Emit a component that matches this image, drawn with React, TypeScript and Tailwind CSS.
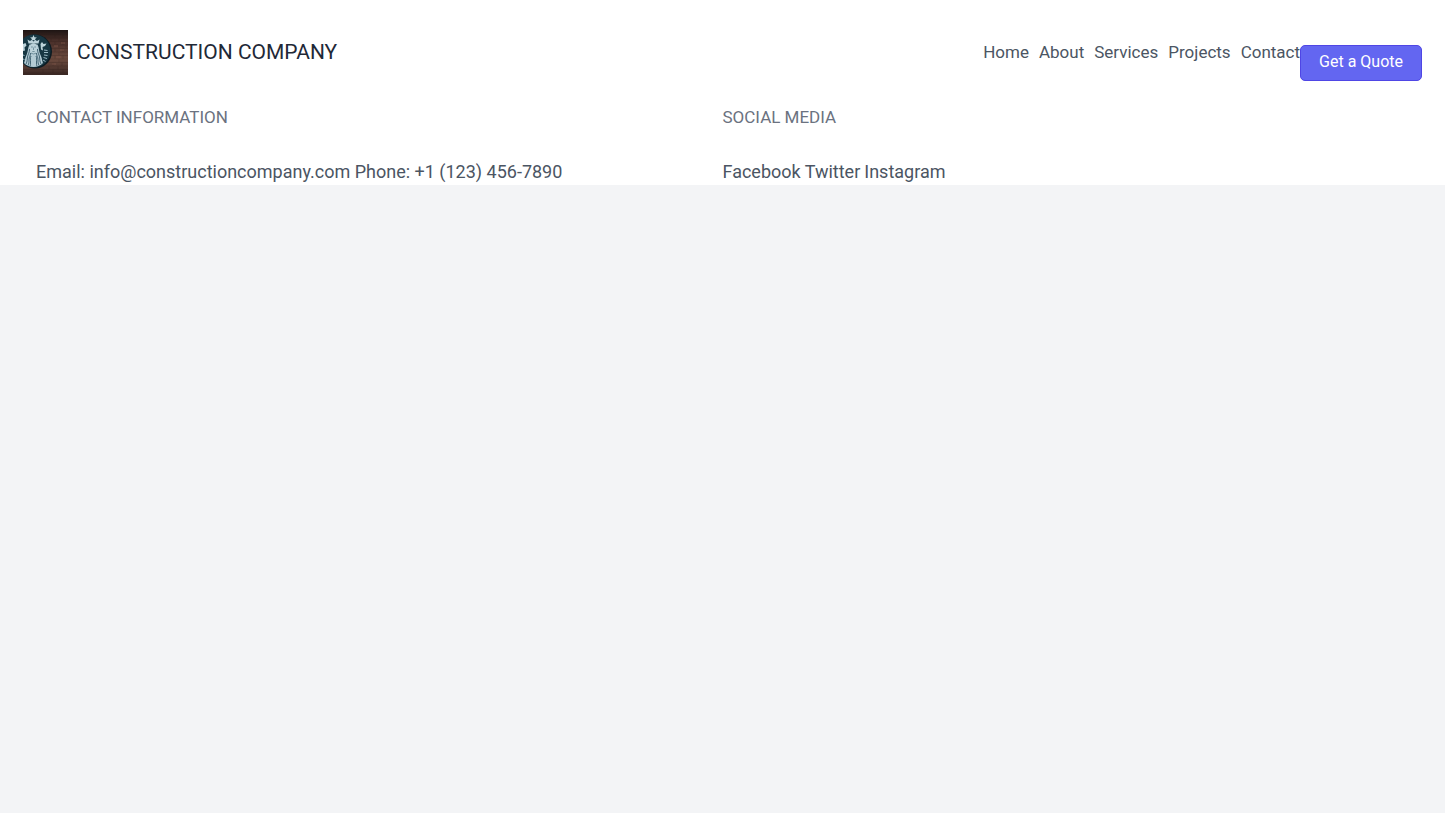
const navLinks = ['Home', 'About', 'Services', 'Projects', 'Contact'];
const socialLinks = ['Facebook', 'Twitter', 'Instagram'];

/**
 * Logo - round siren emblem hanging on a dark brick wall
 */
function Logo() {
  return (
    <svg className="w-[45px] h-[45px] shrink-0" viewBox="0 0 45 45" role="img" aria-label="Logo">
      <defs>
        <linearGradient id="wall" x1="0" y1="0" x2="0" y2="1">
          <stop offset="0" stopColor="#1d1413" />
          <stop offset="0.25" stopColor="#4a302a" />
          <stop offset="0.65" stopColor="#6b4a3e" />
          <stop offset="1" stopColor="#3a2824" />
        </linearGradient>
      </defs>
      <rect width="45" height="45" fill="url(#wall)" />
      {/* Brick courses */}
      <g stroke="#2b1a17" strokeWidth="0.5" opacity="0.4">
        <path d="M0 4.5H45M0 8H45M0 11.5H45M0 15H45M0 18.5H45M0 22H45M0 25.5H45M0 29H45M0 32.5H45M0 36H45M0 39.5H45M0 43H45" />
        <path d="M32 4.5v3.5M40 4.5v3.5M28 8v3.5M36 8v3.5M32 11.5v3.5M40 11.5v3.5M36 15v3.5M43 15v3.5M32 18.5v3.5M40 18.5v3.5M36 22v3.5M32 25.5v3.5M40 25.5v3.5M36 29v3.5M30 32.5v3.5M39 32.5v3.5M26 36v3.5M35 36v3.5M20 39.5v3.5M30 39.5v3.5M40 39.5v3.5" />
      </g>
      <path d="M31 16h4M37 20h4M33 27h5M29 34h4M38 13h4" stroke="#84594b" strokeWidth="0.7" />
      {/* Emblem */}
      <circle cx="12" cy="21.5" r="17" fill="#0c1b22" />
      <circle cx="11" cy="21" r="16.5" fill="#173743" />
      {/* Crown */}
      <path d="M10.5 5l1 2.2 2.4.2-1.8 1.5.5 2.2-2.1-1.2-2.1 1.2.5-2.2-1.8-1.5 2.4-.2z" fill="#bdd3da" />
      <path d="M4.5 9.5L7 11l1.5-1 2 1.5 2-1.5 1.5 1 2.5-1.5-1 4h-10z" fill="#bdd3da" />
      {/* Hair mass behind the face */}
      <path d="M6.5 14.500c-2 4-1 6-3 10.500s-1.500 6-2.500 8c2 2 5 4 9.500 4s7.500-2 9.500-4c-1-2-.5-3.500-2.500-8s-1-6.500-3-10.500z" fill="#b4ccd5" />
      {/* Hair waves */}
      <g fill="none" stroke="#24495a" strokeWidth="0.8">
        <path d="M6.500 19c0 4-1.500 5-2 8s0 4-1.500 7" />
        <path d="M7.500 23c0 3-1.500 4-1.500 6.500s0 4-1 6" />
        <path d="M8 26c-1 2-.5 4-.5 6s0 3-.5 4.500" />
        <path d="M14.500 19c0 4 1.500 5 2 8s0 4 1.500 7" />
        <path d="M13.500 23c0 3 1.500 4 1.500 6.500s0 4 1 6" />
        <path d="M13 26c1 2 .5 4 .5 6s0 3 .5 4.500" />
      </g>
      {/* Face */}
      <ellipse cx="10.5" cy="18" rx="3.7" ry="4.8" fill="#bdd3da" />
      <path d="M8 17h1.800M11.200 17H13M10.500 17.500v2.500M9.300 21.500h2.400M8 23.200q2.500 1.600 5 0" fill="none" stroke="#456a79" strokeWidth="0.6" />
      {/* Tails */}
      <path d="M0 14l2.500-1 1 2.500-2 2 .5 3-2 .5zM17.500 14l1.500-2 1.500 2 3-.5-1.500 2.500-2.500 1 .5 3.500-2-1z" fill="#bdd3da" />
      <path d="M21 20l3.500.5M21 22.500h4M21 25l3.500.5M20.500 27.500l3.500 1M20 30l2.500 1.500M0 25l1.500.5M0 29l1.500.5" stroke="#9dbbc6" strokeWidth="1" />
    </svg>
  );
}

export default function App() {
  return (
    <div className="min-h-screen bg-[#f3f4f6] font-['Roboto',sans-serif] text-lg leading-[27px] text-[#4b5563]">
      <div className="bg-white">
        <header className="flex items-center justify-between px-[23px] py-[23px]">
          <div className="flex items-center gap-[9px]">
            <Logo />
            <h1 className="text-[21px] leading-8 text-[#1f2937]">CONSTRUCTION COMPANY</h1>
          </div>

          <div className="flex items-center">
            <nav className="flex gap-[10px] text-[17px]">
              {navLinks.map((label) => (
                <a key={label} href="#">
                  {label}
                </a>
              ))}
            </nav>
            <button
              type="button"
              className="mt-[22px] h-9 rounded-[5px] border border-[#4f46e5] bg-[#6366f1] px-[18px] pb-[3px] text-base text-white"
            >
              Get a Quote
            </button>
          </div>
        </header>

        <div className="grid grid-cols-2 px-9">
          <section>
            <h2 className="mb-[27px] text-[17px] text-[#6b7280]">CONTACT INFORMATION</h2>
            <p>Email: info@constructioncompany.com Phone: +1 (123) 456-7890</p>
          </section>
          <section>
            <h2 className="mb-[27px] text-[17px] text-[#6b7280]">SOCIAL MEDIA</h2>
            <p className="flex gap-1">
              {socialLinks.map((label) => (
                <a key={label} href="#">
                  {label}
                </a>
              ))}
            </p>
          </section>
        </div>
      </div>
    </div>
  );
}
